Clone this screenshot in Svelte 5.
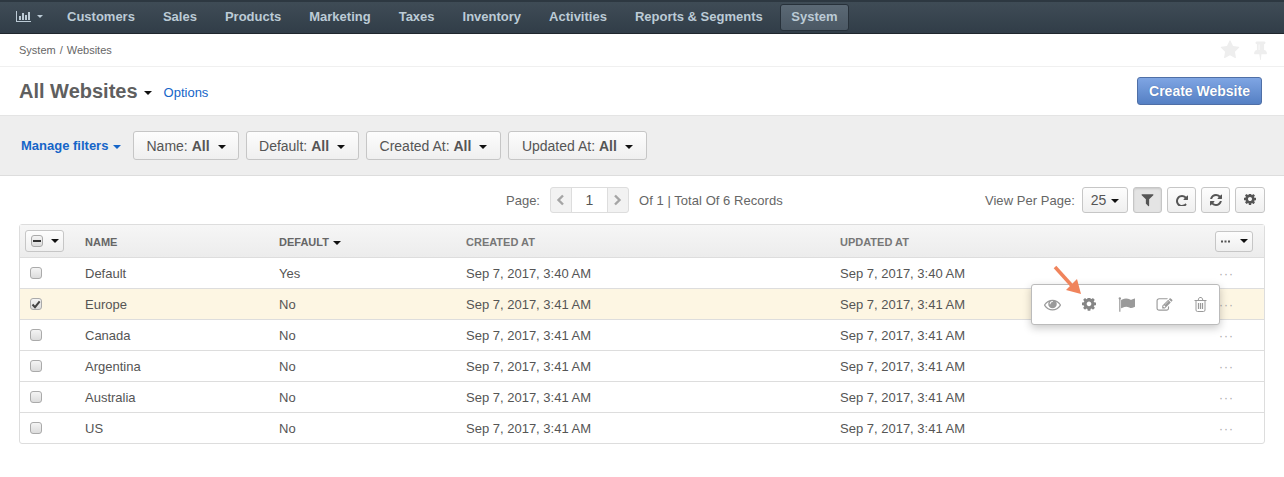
<script>
  const nav = ['Customers', 'Sales', 'Products', 'Marketing', 'Taxes', 'Inventory', 'Activities', 'Reports & Segments'];
  const filters = ['Name', 'Default', 'Created At', 'Updated At'];
  const rows = [
    { name: 'Default', def: 'Yes', created: 'Sep 7, 2017, 3:40 AM', updated: 'Sep 7, 2017, 3:40 AM' },
    { name: 'Europe', def: 'No', created: 'Sep 7, 2017, 3:41 AM', updated: 'Sep 7, 2017, 3:41 AM', active: true },
    { name: 'Canada', def: 'No', created: 'Sep 7, 2017, 3:41 AM', updated: 'Sep 7, 2017, 3:41 AM' },
    { name: 'Argentina', def: 'No', created: 'Sep 7, 2017, 3:41 AM', updated: 'Sep 7, 2017, 3:41 AM' },
    { name: 'Australia', def: 'No', created: 'Sep 7, 2017, 3:41 AM', updated: 'Sep 7, 2017, 3:41 AM' },
    { name: 'US', def: 'No', created: 'Sep 7, 2017, 3:41 AM', updated: 'Sep 7, 2017, 3:41 AM' }
  ];
  const cog = 'M1024 640q0-106-75-181t-181-75-181 75-75 181 75 181 181 75 181-75 75-181zm512-109v222q0 12-8 23t-20 13l-185 28q-19 54-39 91 35 50 107 138 10 12 10 25t-9 23q-27 37-99 108t-94 71q-12 0-26-9l-138-108q-44 23-91 38-16 136-29 186-7 28-36 28h-222q-14 0-24.500-8.500t-11.500-21.500l-28-184q-49-16-90-37l-141 107q-10 9-25 9-14 0-25-11-126-114-165-168-7-10-7-23 0-12 8-23 15-21 51-66.500t54-70.500q-27-50-41-99l-183-27q-13-2-21-12.500t-8-23.500v-222q0-12 8-23t19-13l186-28q14-46 39-92-40-57-107-138-10-12-10-24 0-10 9-23 26-36 98.500-107.500t94.500-71.500q13 0 26 10l138 107q44-23 91-38 16-136 29-186 7-28 36-28h222q14 0 24.500 8.500t11.500 21.500l28 184q49 16 90 37l142-107q9-9 24-9 13 0 25 10 129 119 165 170 7 8 7 22 0 12-8 23-15 21-51 66.500t-54 70.500q26 50 41 98l183 28q13 2 21 12.500t8 23.500z';
</script>

<div class="page">
  <div class="topstrip"></div>
  <nav class="nav">
    <span class="nav-dash">
      <svg width="16" height="11" viewBox="0 0 16 11" fill="#bccbd6">
        <rect x="0" y="0" width="1" height="11" />
        <rect x="0" y="10" width="15" height="1" />
        <rect x="3" y="5" width="2" height="4" />
        <rect x="6" y="2" width="2" height="7" />
        <rect x="9" y="4" width="2" height="5" />
        <rect x="12" y="1" width="2" height="8" />
      </svg>
      <i class="caret nav-caret"></i>
    </span>
    {#each nav as item}
      <span class="nav-item">{item}</span>
    {/each}
    <span class="nav-item nav-active">System</span>
  </nav>

  <div class="crumbs">
    <span class="crumb-path"><span>System</span><span>/</span><span>Websites</span></span>
    <span class="crumb-icons">
      <svg width="20" height="20" viewBox="0 0 1792 1792" fill="#eee"><path d="M1728 647q0 22-26 48l-363 354 86 500q1 7 1 20 0 21-10.500 35.500t-30.500 14.500q-19 0-40-12l-449-236-449 236q-22 12-40 12-21 0-31.500-14.500t-10.500-35.500q0-6 2-20l86-500-364-354q-25-27-25-48 0-37 56-46l502-73 225-455q19-41 49-41t49 41l225 455 502 73q56 9 56 46z" /></svg>
      <svg width="13" height="20" viewBox="0 0 1152 1792" fill="#eee"><path d="M480 864v-448q0-14-9-23t-23-9-23 9-9 23v448q0 14 9 23t23 9 23-9 9-23zm672 352q0 26-19 45t-45 19h-429l-51 483q-2 12-10.500 20.500t-20.500 8.500h-1q-27 0-32-27l-76-485h-404q-26 0-45-19t-19-45q0-123 78.500-221.500t177.500-98.500v-512q-52 0-90-38t-38-90 38-90 90-38h640q52 0 90 38t38 90-38 90-90 38v512q99 0 177.500 98.500t78.500 221.500z" /></svg>
    </span>
  </div>

  <header class="title-bar">
    <h1>All Websites</h1>
    <i class="caret title-caret"></i>
    <a class="options" href="#options">Options</a>
    <button class="create">Create Website</button>
  </header>

  <section class="filters">
    <span class="manage">Manage filters<i class="caret blue"></i></span>
    {#each filters as f}
      <button class="btn filter">{f}: <b>All</b><i class="caret"></i></button>
    {/each}
  </section>

  <div class="pager">
    <span class="page-label">Page:</span>
    <span class="stepper">
      <span class="step"><svg width="9" height="12" viewBox="0 0 9 12"><path d="M7 1.500 2.500 6 7 10.500" fill="none" stroke="#a5a5a5" stroke-width="2.400" /></svg></span>
      <span class="page-num">1</span>
      <span class="step"><svg width="9" height="12" viewBox="0 0 9 12"><path d="M2 1.500 6.500 6 2 10.500" fill="none" stroke="#a5a5a5" stroke-width="2.400" /></svg></span>
    </span>
    <span class="records">Of 1 | Total Of 6 Records</span>
    <span class="spacer"></span>
    <span class="per-label">View Per Page:</span>
    <button class="btn per">25<i class="caret"></i></button>
    <button class="btn tool pressed"><svg width="13" height="13" viewBox="0 64 1408 1536" fill="#555"><path d="M1403 135q17 41-14 70l-493 493v742q0 42-39 59-13 5-25 5-27 0-45-19l-256-256q-19-19-19-45v-486l-493-493q-31-29-14-70 17-39 59-39h1280q42 0 59 39z" /></svg></button>
    <button class="btn tool"><svg width="12" height="12" viewBox="0 0 1536 1536" fill="#555"><path d="M1536 256v448q0 26-19 45t-45 19h-448q-42 0-59-40-17-39 14-69l138-138q-148-137-349-137-104 0-198.500 40.500t-163.500 109.500-109.500 163.500-40.500 198.500 40.500 198.500 109.500 163.500 163.500 109.500 198.500 40.500q119 0 225-52t179-147q7-10 23-12 15 0 25 9l137 138q9 8 9.500 20.500t-7.500 22.500q-109 132-264 204.500t-327 72.500q-156 0-298-61t-245-164-164-245-61-298 61-298 164-245 245-164 298-61q147 0 284.500 55.500t244.500 156.500l130-129q29-31 70-14 39 17 39 59z" /></svg></button>
    <button class="btn tool"><svg width="12" height="12" viewBox="0 0 1536 1536" fill="#555"><path d="M1511 928q0 5-1 7-64 268-268 434.500t-478 166.500q-146 0-282.500-55t-243.500-157l-129 129q-19 19-45 19t-45-19-19-45v-448q0-26 19-45t45-19h448q26 0 45 19t19 45-19 45l-137 137q71 66 161 102t187 36q134 0 250-65t186-179q11-17 53-117 8-23 30-23h192q13 0 22.500 9.500t9.500 22.500zm25-800v448q0 26-19 45t-45 19h-448q-26 0-45-19t-19-45 19-45l138-138q-148-137-349-137-134 0-250 65t-186 179q-11 17-53 117-8 23-30 23h-199q-13 0-22.500-9.500t-9.500-22.500v-7q65-268 270-434.500t480-166.500q146 0 284 55.500t245 156.500l130-129q19-19 45-19t45 19 19 45z" /></svg></button>
    <button class="btn tool last"><svg width="12" height="12" viewBox="0 0 1536 1536" fill="#555"><path d={cog} /></svg></button>
  </div>

  <div class="grid">
    <div class="row head">
      <span class="cell-check"><span class="check-btn"><span class="box minus"></span><i class="caret"></i></span></span>
      <span class="label">NAME</span>
      <span class="label def-head">DEFAULT<i class="caret"></i></span>
      <span class="label light">CREATED AT</span>
      <span class="label light">UPDATED AT</span>
      <span class="cell-more"><span class="more-btn"><svg width="9" height="3" viewBox="0 0 9 3" fill="#555"><rect width="2" height="2" y="0.500" /><rect x="3.500" width="2" height="2" y="0.500" /><rect x="7" width="2" height="2" y="0.500" /></svg><i class="caret"></i></span></span>
    </div>
    {#each rows as r}
      <div class="row body" class:active={r.active}>
        <span class="cell-check"><span class="box" class:checked={r.active}>{#if r.active}<svg width="10" height="9" viewBox="0 0 10 9"><path d="M1.500 4.500 4 7.200 8.700 1.300" fill="none" stroke="#444" stroke-width="2" /></svg>{/if}</span></span>
        <span>{r.name}</span>
        <span>{r.def}</span>
        <span>{r.created}</span>
        <span>{r.updated}</span>
        <span class="cell-more dots">···</span>
      </div>
    {/each}
  </div>

  <div class="popup">
    <svg width="17" height="17" viewBox="0 0 1792 1792" fill="#9a9a9a"><path d="M1664 960q-152-236-381-353 61 104 61 225 0 185-131.500 316.500t-316.500 131.500-316.500-131.500-131.500-316.500q0-121 61-225-229 117-381 353 133 205 333.500 326.500t434.500 121.500 434.500-121.500 333.500-326.500zm-720-384q0-20-14-34t-34-14q-125 0-214.500 89.500t-89.500 214.500q0 20 14 34t34 14 34-14 14-34q0-86 61-147t147-61q20 0 34-14t14-34zm848 384q0 34-20 69-140 230-376.500 368.500t-499.500 138.500-499.500-139-376.500-368q-20-35-20-69t20-69q140-229 376.500-368t499.500-139 499.500 139 376.500 368q20 35 20 69z" /></svg>
    <svg width="14" height="14" viewBox="0 0 1536 1536" fill="#858585"><path d={cog} /></svg>
    <svg width="17" height="17" viewBox="0 0 1792 1792" fill="#9a9a9a"><path d="M320 256q0 72-64 110v1266q0 13-9.500 22.500t-22.500 9.500h-64q-13 0-22.500-9.500t-9.500-22.500v-1266q-64-38-64-110 0-53 37.500-90.500t90.500-37.500 90.500 37.500 37.500 90.500zm1472 64v763q0 25-12.500 38.500t-39.500 27.500q-215 116-369 116-61 0-123.500-22t-108.500-48-115.500-48-142.500-22q-192 0-464 146-17 9-33 9-26 0-45-19t-19-45v-742q0-32 31-55 21-14 79-43 236-120 421-120 107 0 200 29t219 88q38 19 88 19 54 0 117.500-21t110-47 88-47 54.500-21q26 0 45 19t19 45z" /></svg>
    <svg width="17" height="16" viewBox="0 0 1792 1792" fill="#9a9a9a"><path d="M888 1184l116-116-152-152-116 116v56h96v96h56zm440-720q-16-16-33 1l-350 350q-17 17-1 33t33-1l350-350q17-17 1-33zm80 594v190q0 119-84.500 203.500t-203.500 84.500h-832q-119 0-203.500-84.500t-84.500-203.500v-832q0-119 84.500-203.500t203.500-84.500h832q63 0 117 25 15 7 18 23 3 17-9 29l-49 49q-14 14-32 8-23-6-45-6h-832q-66 0-113 47t-47 113v832q0 66 47 113t113 47h832q66 0 113-47t47-113v-126q0-13 9-22l64-64q15-15 35-7t20 29zm-96-738l288 288-672 672h-288v-288zm444 132l-92 92-288-288 92-92q28-28 68-28t68 28l152 152q28 28 28 68t-28 68z" /></svg>
    <svg width="13" height="15" viewBox="0 0 13 15" fill="none" stroke="#9a9a9a"><path d="M.5 3.500h12M2 3.500v9.500q0 1.500 1.500 1.500h6q1.500 0 1.500-1.500V3.500M4 3.500l1-2.500q.2-.5 .8-.5h1.400q.6 0 .8.500l1 2.500" /><path d="M4.500 6v6M6.500 6v6M8.500 6v6" stroke-width="1.200" /></svg>
  </div>

  <svg class="arrow" width="34" height="36" viewBox="0 0 34 36">
    <path d="M3 3 L22 24" stroke="#f0845c" stroke-width="3.500" />
    <path d="M29 30 L14 26 L25 15 Z" fill="#f0845c" />
  </svg>
</div>

<style>
  :global(body) {
    margin: 0;
    background: #fff;
  }

  .page {
    position: relative;
    width: 1284px;
    height: 477px;
    overflow: hidden;
    font-family: "Liberation Sans", Arial, sans-serif;
    font-size: 14px;
    color: #555;
  }

  .caret {
    display: inline-block;
    width: 0;
    height: 0;
    border-left: 4px solid transparent;
    border-right: 4px solid transparent;
    border-top: 4px solid #111;
    vertical-align: middle;
  }

  .topstrip {
    height: 2px;
    background: #2d3841;
  }

  .nav {
    display: flex;
    align-items: center;
    box-sizing: border-box;
    height: 32px;
    padding: 0 0 2px 16px;
    background: linear-gradient(#3f4c56, #313d48);
    border-bottom: 1px solid #20272d;
    font-size: 13px;
    font-weight: bold;
    color: #bccbd6;
  }

  .nav-dash {
    display: flex;
    align-items: center;
    gap: 5px;
    width: 51px;
  }

  .nav-caret {
    border-width: 3px 3px 0;
    border-top-color: #bccbd6;
  }

  .nav-item {
    margin-right: 28px;
  }

  .nav-active {
    margin: 1px 0 -1px -10.500px;
    padding: 5px 10px 7px;
    background: linear-gradient(#5b6975, #4b5864);
    border: 1px solid #27313a;
    border-radius: 3px;
    line-height: 13px;
  }

  .crumbs {
    display: flex;
    align-items: center;
    justify-content: space-between;
    height: 32px;
    padding: 0 17px 0 19px;
    border-bottom: 1px solid #f0f0f0;
    font-size: 11px;
    color: #666;
  }

  .crumb-path {
    display: flex;
    gap: 4px;
  }

  .crumb-icons {
    display: flex;
    gap: 14px;
    align-items: center;
    margin-top: -1px;
  }

  .title-bar {
    display: flex;
    align-items: center;
    height: 48px;
    padding: 0 22px 0 19px;
    box-sizing: border-box;
  }

  h1 {
    margin: 1px 0 0;
    font-size: 20px;
    font-weight: bold;
    color: #5f5f5f;
  }

  .title-caret {
    margin: 3px 0 0 6px;
  }

  .options {
    margin-left: 12px;
    margin-top: 3px;
    font-size: 13px;
    color: #1565c8;
    text-decoration: none;
  }

  .create {
    margin-left: auto;
    width: 125px;
    height: 28px;
    padding: 0;
    border: 1px solid #4f6fa6;
    border-radius: 3px;
    background: linear-gradient(#7fa5e3, #5580c4);
    color: #fff;
    font: bold 14px "Liberation Sans", Arial, sans-serif;
    text-shadow: 0 0 1px #3c5f9c;
  }

  .btn {
    box-sizing: border-box;
    border: 1px solid #c6c6c6;
    border-radius: 3px;
    background: linear-gradient(#fdfdfd, #efefef);
    color: #555;
    padding: 0;
    font: 14px "Liberation Sans", Arial, sans-serif;
  }

  .filters {
    display: flex;
    align-items: center;
    gap: 7px;
    box-sizing: border-box;
    height: 61px;
    padding-left: 21px;
    background: #eee;
    border-top: 1px solid #e4e4e4;
    border-bottom: 1px solid #ddd;
  }

  .manage {
    width: 105px;
    font-size: 13px;
    font-weight: bold;
    color: #1565c8;
  }

  .manage .caret {
    margin-left: 5px;
  }

  .blue {
    border-top-color: #1565c8;
  }

  .filter {
    height: 29px;
    padding: 0 13px 0 12.500px;
  }

  .manage + .filter {
    padding-right: 12px;
  }

  .filter b {
    color: #555;
  }

  .filter .caret {
    margin-left: 8px;
  }

  .pager {
    display: flex;
    align-items: center;
    height: 48px;
    padding: 0 19px 0 506px;
    box-sizing: border-box;
    font-size: 13px;
    color: #666;
  }

  .stepper {
    display: flex;
    height: 26px;
    box-sizing: border-box;
    margin: 0 10px;
    border: 1px solid #ddd;
    border-radius: 3px;
    background: #f2f2f2;
  }

  .step {
    display: flex;
    align-items: center;
    justify-content: center;
    width: 20px;
  }

  .page-num {
    width: 35px;
    font-size: 14px;
    line-height: 24px;
    text-align: center;
    background: #fff;
    border-left: 1px solid #ddd;
    border-right: 1px solid #ddd;
    color: #555;
  }

  .records {
    letter-spacing: 0.05px;
  }

  .spacer {
    flex: 1;
  }

  .per-label {
    margin-right: 7px;
    letter-spacing: 0.05px;
  }

  .per {
    width: 46px;
    height: 26px;
    font-size: 14px;
  }

  .per .caret {
    margin-left: 5px;
  }

  .tool {
    display: flex;
    align-items: center;
    justify-content: center;
    width: 29px;
    height: 26px;
    margin-left: 5px;
  }

  .last {
    width: 30px;
  }

  .pressed {
    background: #e4e4e4;
    box-shadow: inset 0 1px 2px rgba(0, 0, 0, 0.12);
  }

  .grid {
    margin: 0 19px;
    border: 1px solid #ddd;
    border-radius: 3px;
    font-size: 13px;
  }

  .row {
    display: grid;
    grid-template-columns: 65px 194px 187px 374px 1fr 49px;
    align-items: center;
  }

  .head {
    height: 32px;
    background: linear-gradient(#f6f6f6, #ececec);
    font-size: 11px;
    font-weight: bold;
    color: #666;
  }

  .label {
    padding-top: 2px;
  }

  .head .light {
    color: #777;
    font-weight: bold;
  }

  .def-head .caret {
    margin-left: 4px;
  }

  .body {
    height: 30px;
    border-top: 1px solid #ddd;
    color: #555;
  }

  .active {
    background: #fdf6e3;
  }

  .cell-check {
    padding-left: 10px;
    display: flex;
  }

  .check-btn {
    display: flex;
    align-items: center;
    justify-content: space-between;
    box-sizing: border-box;
    width: 39px;
    height: 22px;
    margin-left: -5px;
    padding: 0 4px 0 5px;
    border: 1px solid #c6c6c6;
    border-radius: 3px;
    background: linear-gradient(#fdfdfd, #efefef);
  }

  .box {
    display: flex;
    align-items: center;
    justify-content: center;
    box-sizing: border-box;
    width: 12px;
    height: 12px;
    border: 1px solid #aaa;
    border-radius: 3px;
    background: linear-gradient(#f4f4f4, #dcdcdc);
  }

  .minus::after {
    content: "";
    width: 8px;
    height: 2px;
    background: #333;
  }

  .cell-more {
    text-align: left;
  }

  .dots {
    color: #aaa;
    font-size: 12px;
    letter-spacing: 1px;
    padding-left: 4px;
    padding-top: 1px;
  }

  .more-btn {
    display: flex;
    align-items: center;
    justify-content: space-between;
    box-sizing: border-box;
    width: 38px;
    height: 21px;
    padding: 0 4px 0 5px;
    border: 1px solid #c6c6c6;
    border-radius: 3px;
    background: linear-gradient(#fdfdfd, #efefef);
  }

  .popup {
    position: absolute;
    left: 1031px;
    top: 284px;
    box-sizing: border-box;
    width: 189px;
    height: 41px;
    display: flex;
    align-items: center;
    justify-content: space-between;
    padding: 0 12px;
    background: #fff;
    border: 1px solid #bbb;
    border-radius: 3px;
    box-shadow: 0 3px 8px rgba(0, 0, 0, 0.22);
  }

  .arrow {
    position: absolute;
    left: 1052px;
    top: 264px;
  }
</style>
